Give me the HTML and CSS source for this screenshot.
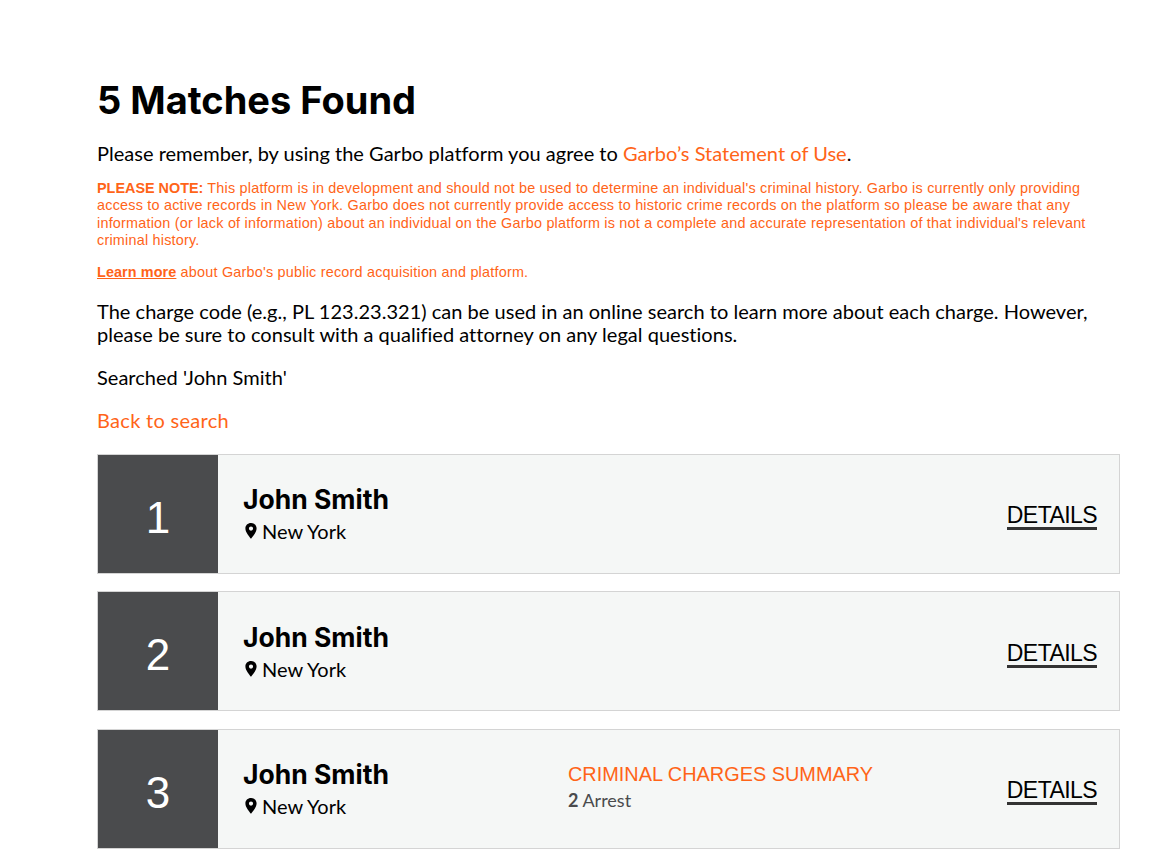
FILE: index.html
```html
<!DOCTYPE html>
<html lang="en">
<head>
<meta charset="utf-8">
<title>5 Matches Found</title>
<link rel="stylesheet" href="styles.css">
</head>
<body>
<main class="page">
  <h1 class="title">5 Matches Found</h1>
  <p class="lead">Please remember, by using the Garbo platform you agree to <a class="link" href="#">Garbo’s Statement of Use</a>.</p>
  <p class="note"><strong class="note-strong">PLEASE NOTE:</strong> This platform is in development and should not be used to determine an individual's criminal history. Garbo is currently only providing access to active records in New York. Garbo does not currently provide access to historic crime records on the platform so please be aware that any information (or lack of information) about an individual on the Garbo platform is not a complete and accurate representation of that individual's relevant criminal history.</p>
  <p class="note note-more"><a class="note-link" href="#">Learn more</a> about Garbo's public record acquisition and platform.</p>
  <p class="lead charge">The charge code (e.g., PL 123.23.321) can be used in an online search to learn more about each charge. However, please be sure to consult with a qualified attorney on any legal questions.</p>
  <p class="lead searched">Searched 'John Smith'</p>
  <p class="lead back"><a class="link" href="#">Back to search</a></p>

  <ul class="results">
    <li class="card">
      <div class="num">1</div>
      <div class="person">
        <div class="name">John Smith</div>
        <div class="place"><svg class="pin" viewBox="0 0 12 16"><path fill-rule="evenodd" d="M6 0C2.7 0 .4 2.4.4 5.5.4 9.300 4.300 13.600 6 15.800 7.700 13.600 11.600 9.300 11.600 5.500 11.600 2.400 9.300 0 6 0ZM6 3.500a2.100 2.100 0 1 1 0 4.200 2.100 2.100 0 0 1 0-4.200Z"/></svg>New York</div>
      </div>
      <div class="summary"></div>
      <a class="details" href="#">DETAILS</a>
    </li>
    <li class="card">
      <div class="num">2</div>
      <div class="person">
        <div class="name">John Smith</div>
        <div class="place"><svg class="pin" viewBox="0 0 12 16"><path fill-rule="evenodd" d="M6 0C2.7 0 .4 2.4.4 5.5.4 9.300 4.300 13.600 6 15.800 7.700 13.600 11.600 9.300 11.600 5.500 11.600 2.400 9.300 0 6 0ZM6 3.500a2.100 2.100 0 1 1 0 4.200 2.100 2.100 0 0 1 0-4.200Z"/></svg>New York</div>
      </div>
      <div class="summary"></div>
      <a class="details" href="#">DETAILS</a>
    </li>
    <li class="card">
      <div class="num">3</div>
      <div class="person">
        <div class="name">John Smith</div>
        <div class="place"><svg class="pin" viewBox="0 0 12 16"><path fill-rule="evenodd" d="M6 0C2.7 0 .4 2.4.4 5.5.4 9.300 4.300 13.600 6 15.800 7.700 13.600 11.600 9.300 11.600 5.500 11.600 2.400 9.300 0 6 0ZM6 3.500a2.100 2.100 0 1 1 0 4.200 2.100 2.100 0 0 1 0-4.200Z"/></svg>New York</div>
      </div>
      <div class="summary">
        <div class="summary-title">CRIMINAL CHARGES SUMMARY</div>
        <div class="summary-line"><b>2</b> Arrest</div>
      </div>
      <a class="details" href="#">DETAILS</a>
    </li>
  </ul>
</main>
</body>
</html>
```
FILE: styles.css
```css
* { box-sizing: border-box; }
html, body { margin: 0; background: #fff; }
html { overflow: hidden; height: 859px; }
body { color: #000; font-family: "Lato", "Liberation Sans", sans-serif; }
.page { width: 1023px; margin-left: 97px; padding-top: 78px; }
.title { margin: 0 0 20px; font-family: "Inter", sans-serif; font-size: 38px; line-height: 44px; font-weight: 700; letter-spacing: 0; }
.lead { margin: 0; font-size: 20px; line-height: 23px; letter-spacing: 0.02px; }
.link { color: #ff6418; text-decoration: none; }
.back .link { letter-spacing: 0.3px; }
.note { margin: 15px 0 0; color: #ff6418; font-family: "Liberation Sans", sans-serif; font-size: 14.4px; line-height: 17.28px; letter-spacing: 0.215px; }
.note-strong { letter-spacing: 0; }
.note-more { margin-top: 15px; }
.note-link { color: #ff6418; font-weight: 700; letter-spacing: 0.1px; text-decoration: underline; }
.charge { margin-top: 19px; }
.searched { margin-top: 20px; }
.back { margin-top: 20px; }
.results { list-style: none; margin: 21.5px 0 0; padding: 0; display: flex; flex-direction: column; gap: 17.5px; }
.card { display: flex; align-items: center; height: 120px; background: #f5f7f6; border: 1px solid #d4d4d4; }
.num { flex: none; align-self: stretch; width: 120px; padding-top: 8px; background: #4a4b4d; color: #fff; font-family: "Liberation Sans", sans-serif; font-size: 44px; display: flex; align-items: center; justify-content: center; }
.person { flex: none; width: 350px; padding-left: 25px; }
.name { font-family: "Inter", sans-serif; font-size: 26.5px; line-height: 32px; font-weight: 700; }
.place { display: flex; align-items: center; font-size: 20px; line-height: 26px; margin-top: 3px; }
.pin { width: 12px; height: 16px; margin: 0 5px 0 2px; }
.summary { flex: 1; margin-bottom: 5px; }
.summary-title { color: #ff6418; font-family: "Liberation Sans", sans-serif; font-size: 19.9px; line-height: 24px; }
.summary-line { color: #4a4b4d; font-family: "Lato", sans-serif; font-size: 18px; line-height: 20px; margin-top: 4px; }
.details { color: #000; font-family: "Liberation Sans", sans-serif; font-size: 23px; letter-spacing: -0.57px; line-height: 23px; padding-top: 2px; text-decoration: none; border-bottom: 3px solid #333; margin: 5px 22px 0 0; }
```
